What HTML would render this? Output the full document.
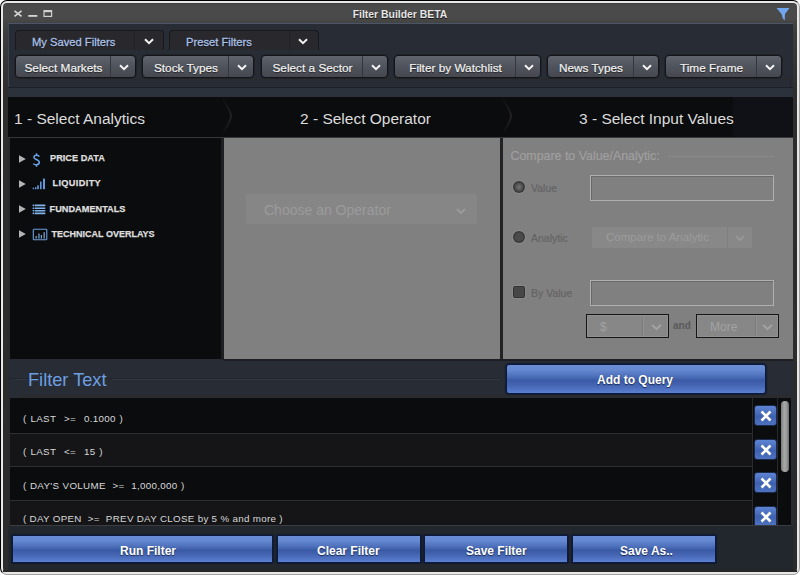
<!DOCTYPE html>
<html><head><meta charset="utf-8">
<style>
*{margin:0;padding:0;box-sizing:border-box}
html,body{width:800px;height:575px;overflow:hidden;background:#fff;font-family:"Liberation Sans",sans-serif}
.a{position:absolute}
#win{position:absolute;left:0;top:0;width:800px;height:575px;border-radius:7px;border:1px solid;border-color:#000 #a0a0a0 #a0a0a0 #000;background:#e8e8e8;}

#win3{position:absolute;left:3px;top:3px;width:794px;height:569px;border-radius:4px;background:linear-gradient(#3e3e3e 0,#4a4a4a 2px,#4a4a4a 16px,#444442 19px,#3c3c3c 30px,#2e2e2e 90px,#2b2b2b 100%);}
.title{left:0;width:800px;top:9.5px;text-align:center;color:#e6e6e6;font-weight:bold;font-size:10.4px;line-height:10px;text-shadow:0 1px 1px #111}
#panel{left:8px;top:23px;width:785px;height:547px;background:#272c35;border-top:1px solid #4a5668}
.tab{height:20px;top:30px;border:1px solid #17191d;border-bottom:none;border-radius:4px 4px 0 0;background:#29292d}
.tab .t{position:absolute;left:16px;top:2px;height:19px;line-height:19px;color:#aec4e8;font-size:11.2px;-webkit-text-stroke:0.3px #a4bde4;text-shadow:0 1px 1px #111}
.tab .d{position:absolute;top:0;height:19px;border-left:1px solid #222327}
.btn{top:55px;height:23px;border:1px solid #131519;box-shadow:0 0 0 0.5px #1a1c20;border-radius:4px;background:linear-gradient(#60646d,#4f535b 50%,#45484f);}
.btn .t{position:absolute;left:0;top:1.5px;height:21px;line-height:21px;text-align:center;color:#f2f2f2;font-size:11.8px;text-shadow:0 1px 1px #222;-webkit-text-stroke:0.2px #f2f2f2}
.btn .d{position:absolute;top:0;width:1px;height:21px;background:#33363c}
.chev{position:absolute}
.hdr{top:97px;height:40px;background:#0b0c0e;color:#e2e2e2;font-size:15.2px;line-height:40px}
.blue{border:1px solid #0b1a3e;border-radius:1px;box-shadow:0 0 1px 1px rgba(8,18,45,.55);background:linear-gradient(#6a8fd6 0%,#6588d1 18%,#4e70bb 40%,#3a5aa6 55%,#4565b2 72%,#5a80d0 100%);}
.row{left:9px;width:743px;color:#d8d8d8;font-size:9.8px;letter-spacing:0.3px;white-space:pre}
.xb{left:754px;width:23px;height:21px;border-radius:3px;background:linear-gradient(#5d84d3,#3f62b0 55%,#4d72c0);border:1px solid #1b2a4d}
.btxt{color:#fff;font-size:12px;font-weight:bold;line-height:16px;white-space:pre;text-shadow:0 1px 1px #1a2a55}
</style></head><body>
<div id="win"></div><div id="win2"></div><div id="win3"></div>
<!-- title bar icons -->
<svg class="a" style="left:12px;top:9px" width="44" height="10" viewBox="0 0 44 10">
 <path d="M2.5 1.9 L9.5 7.3 M9.5 1.9 L2.5 7.3" stroke="#d6d6d6" stroke-width="1.7"/>
 <rect x="16.3" y="6" width="9" height="1.8" fill="#d6d6d6"/>
 <rect x="32" y="1.6" width="7.6" height="5.8" fill="none" stroke="#d0d0d0" stroke-width="1.2"/>
 <rect x="32" y="1.6" width="7.6" height="1.6" fill="#d0d0d0"/>
</svg>
<div class="a title">Filter Builder BETA</div>
<svg class="a" style="left:776px;top:7px" width="15" height="15" viewBox="0 0 15 15">
 <path d="M0.5 1 L13.5 1 L9 7 L8.7 13.5 L6.8 11.5 L5.5 7 Z" fill="#6fa6ee"/>
</svg>

<div id="panel" class="a"></div>
<div class="a" style="left:8px;top:24px;width:1px;height:73px;background:#3d4654"></div>

<!-- tabs -->
<div class="a tab" style="left:15px;width:149px"><div class="t" style="width:119px">My Saved Filters</div><div class="d" style="left:118px;width:29px"></div>
<svg class="chev" style="left:127.5px;top:7px" width="10" height="7" viewBox="0 0 10 7"><path d="M1 1.2 L5 5.2 L9 1.2" fill="none" stroke="#f4f4f4" stroke-width="2"/></svg></div>
<div class="a tab" style="left:169px;width:150px"><div class="t" style="width:120px">Preset Filters</div><div class="d" style="left:119px;width:29px"></div>
<svg class="chev" style="left:127.5px;top:7px" width="10" height="7" viewBox="0 0 10 7"><path d="M1 1.2 L5 5.2 L9 1.2" fill="none" stroke="#f4f4f4" stroke-width="2"/></svg></div>

<!-- filter buttons -->
<div class="a btn" style="left:15px;width:121px"><div class="t" style="width:95px">Select Markets</div><div class="d" style="left:94px"></div><svg class="chev" style="left:103px;top:8px" width="10" height="7" viewBox="0 0 10 7"><path d="M1 1.2 L5 5.2 L9 1.2" fill="none" stroke="#f4f4f4" stroke-width="2"/></svg></div>
<div class="a btn" style="left:142px;width:112px"><div class="t" style="width:86px">Stock Types</div><div class="d" style="left:85px"></div><svg class="chev" style="left:94px;top:8px" width="10" height="7" viewBox="0 0 10 7"><path d="M1 1.2 L5 5.2 L9 1.2" fill="none" stroke="#f4f4f4" stroke-width="2"/></svg></div>
<div class="a btn" style="left:261px;width:127px"><div class="t" style="width:101px">Select a Sector</div><div class="d" style="left:100px"></div><svg class="chev" style="left:109px;top:8px" width="10" height="7" viewBox="0 0 10 7"><path d="M1 1.2 L5 5.2 L9 1.2" fill="none" stroke="#f4f4f4" stroke-width="2"/></svg></div>
<div class="a btn" style="left:394px;width:147px"><div class="t" style="width:121px">Filter by Watchlist</div><div class="d" style="left:120px"></div><svg class="chev" style="left:129px;top:8px" width="10" height="7" viewBox="0 0 10 7"><path d="M1 1.2 L5 5.2 L9 1.2" fill="none" stroke="#f4f4f4" stroke-width="2"/></svg></div>
<div class="a btn" style="left:547px;width:112px"><div class="t" style="width:86px">News Types</div><div class="d" style="left:85px"></div><svg class="chev" style="left:94px;top:8px" width="10" height="7" viewBox="0 0 10 7"><path d="M1 1.2 L5 5.2 L9 1.2" fill="none" stroke="#f4f4f4" stroke-width="2"/></svg></div>
<div class="a btn" style="left:665px;width:117px"><div class="t" style="width:91px">Time Frame</div><div class="d" style="left:90px"></div><svg class="chev" style="left:99px;top:8px" width="10" height="7" viewBox="0 0 10 7"><path d="M1 1.2 L5 5.2 L9 1.2" fill="none" stroke="#f4f4f4" stroke-width="2"/></svg></div>

<!-- strip below buttons -->
<div class="a" style="left:9px;top:79px;width:781px;height:1px;background:#2b2b2e"></div>
<div class="a" style="left:790px;top:79px;width:1px;height:18px;background:#22252b"></div>
<div class="a" style="left:8px;top:87px;width:785px;height:1px;background:#1d2026"></div>
<div class="a" style="left:8px;top:88px;width:785px;height:9px;background:#2c323b"></div>

<!-- headers -->
<div class="a hdr" style="left:8px;width:785px"></div>
<div class="a" style="left:733px;top:97px;width:60px;height:40px;background:#0f1116"></div>
<div class="a hdr" style="left:14px;width:200px;background:none;padding-top:2px;font-size:15.5px;color:#dcdcdc">1 - Select Analytics</div>
<div class="a hdr" style="left:300px;width:200px;background:none;padding-top:2px;font-size:15.5px;color:#dcdcdc">2 - Select Operator</div>
<div class="a hdr" style="left:579px;width:200px;background:none;padding-top:2px;font-size:15.5px;color:#dcdcdc">3 - Select Input Values</div>
<svg class="a" style="left:218px;top:97px" width="16" height="40" viewBox="0 0 16 40"><defs><linearGradient id="cg" x1="0" y1="0" x2="0" y2="1"><stop offset="0" stop-color="#0b0c0e"/><stop offset="0.5" stop-color="#232326"/><stop offset="1" stop-color="#0b0c0e"/></linearGradient></defs><path d="M4 1 C8 7 13 14 13 19 C13 24 8 31 4 38" fill="none" stroke="url(#cg)" stroke-width="2"/></svg>
<svg class="a" style="left:498px;top:97px" width="16" height="40" viewBox="0 0 16 40"><path d="M4 1 C8 7 13 14 13 19 C13 24 8 31 4 38" fill="none" stroke="url(#cg)" stroke-width="2"/></svg>
<div class="a" style="left:8px;top:137px;width:785px;height:1px;background:#36383c"></div>

<!-- column panels -->
<div class="a" style="left:8px;top:138px;width:2px;height:221px;background:#2b2b2b"></div>
<div class="a" style="left:10px;top:138px;width:211px;height:221px;background:#0b0c0e"></div>
<div class="a" style="left:221px;top:138px;width:3px;height:222px;background:#1d1f23"></div>
<div class="a" style="left:224px;top:138px;width:276px;height:221px;background:#808080"></div>
<div class="a" style="left:500px;top:138px;width:3px;height:222px;background:#222325"></div>
<div class="a" style="left:503px;top:138px;width:290px;height:221px;background:#808080"></div>

<!-- tree -->
<svg class="a" style="left:18px;top:155px" width="8" height="8" viewBox="0 0 8 8"><path d="M1 0.3 L7.8 4 L1 7.7Z" fill="#b4b4b4"/></svg>
<svg class="a" style="left:18px;top:180px" width="8" height="8" viewBox="0 0 8 8"><path d="M1 0.3 L7.8 4 L1 7.7Z" fill="#b4b4b4"/></svg>
<svg class="a" style="left:18px;top:205px" width="8" height="8" viewBox="0 0 8 8"><path d="M1 0.3 L7.8 4 L1 7.7Z" fill="#b4b4b4"/></svg>
<svg class="a" style="left:18px;top:230px" width="8" height="8" viewBox="0 0 8 8"><path d="M1 0.3 L7.8 4 L1 7.7Z" fill="#b4b4b4"/></svg>
<svg class="a" style="left:32px;top:153px" width="9" height="14" viewBox="0 0 9 14"><path d="M7.3 3.6 C6.6 2 2.2 1.6 1.9 4.3 C1.7 6.6 7.4 6.5 7.3 9.4 C7.2 12.2 2.6 12.3 1.3 10.6 M4.5 0.3 V2.6 M4.5 11.4 V13.7" fill="none" stroke="#6aa3e6" stroke-width="1.5"/></svg>
<svg class="a" style="left:32px;top:178px" width="14" height="12" viewBox="0 0 14 12"><g fill="#5f98dc"><rect x="0.7" y="9.7" width="1.4" height="1.5"/><rect x="3" y="9.2" width="1.5" height="2"/><rect x="5.2" y="7.3" width="1.6" height="3.9"/><rect x="8" y="3.6" width="1.6" height="7.6"/><rect x="11" y="0.6" width="2" height="10.6"/></g></svg>
<svg class="a" style="left:32px;top:204px" width="14" height="11" viewBox="0 0 14 11"><g fill="#80b3ec"><rect x="0.5" y="0.6" width="13" height="1.6" rx="0.8"/><rect x="0.5" y="3.4" width="13" height="1.6" rx="0.8"/><rect x="0.5" y="6" width="13" height="1.6" rx="0.8"/><rect x="0.5" y="8.5" width="13" height="1.7" rx="0.8"/></g><g fill="#0b0c0e"><rect x="2.3" y="0" width="0.6" height="11"/></g></svg>
<svg class="a" style="left:32px;top:228px" width="16" height="13" viewBox="0 0 16 13"><rect x="1.3" y="1.3" width="13.5" height="10.5" rx="0.8" fill="none" stroke="#6c9fdc" stroke-width="1.1"/><g fill="#8ab8ee"><rect x="3.6" y="8" width="1.1" height="2.6"/><rect x="6.4" y="5.5" width="1.1" height="5.1"/><rect x="8.8" y="7" width="1.1" height="3.6"/><rect x="11.6" y="4.2" width="1.1" height="6.4"/></g></svg>
<div class="a" style="left:50px;top:153px;font-size:9.2px;font-weight:bold;color:#dedede;line-height:10px;-webkit-text-stroke:0.25px #dedede">PRICE DATA</div>
<div class="a" style="left:52.5px;top:178px;letter-spacing:0.35px;font-size:9.2px;font-weight:bold;color:#dedede;line-height:10px;-webkit-text-stroke:0.25px #dedede">LIQUIDITY</div>
<div class="a" style="left:49.6px;top:203.5px;font-size:9.2px;font-weight:bold;color:#dedede;line-height:10px;-webkit-text-stroke:0.25px #dedede">FUNDAMENTALS</div>
<div class="a" style="left:51.6px;top:228.5px;font-size:9px;font-weight:bold;color:#dedede;line-height:10px;-webkit-text-stroke:0.25px #dedede">TECHNICAL OVERLAYS</div>

<!-- operator -->
<div class="a" style="left:246px;top:194px;width:231px;height:30px;background:#868686;border-radius:2px"></div>
<div class="a" style="left:264px;top:201px;font-size:14px;color:#9b9b9b;line-height:18px">Choose an Operator</div>
<svg class="a" style="left:456px;top:208px" width="10" height="6" viewBox="0 0 10 6"><path d="M1 1 L5 5 L9 1" fill="none" stroke="#a0a0a0" stroke-width="1.5"/></svg>

<!-- input values -->
<div class="a" style="left:510.5px;top:150px;font-size:12.4px;color:#a0a0a0;line-height:13px;-webkit-text-stroke:0.15px #a0a0a0">Compare to Value/Analytic:</div>
<div class="a" style="left:668px;top:156px;width:107px;height:1px;background:#8a8a8a"></div>
<div class="a" style="left:513px;top:180.5px;width:12px;height:12px;border-radius:50%;background:radial-gradient(circle,#747474 0,#5c5c5c 2.5px,#4c4c4c 4px,#3a3a3a 5px,#383838 6px);box-shadow:0 0 0 1px #8a8a8a"></div>
<div class="a" style="left:531px;top:182px;font-size:10.5px;color:#646464;line-height:12px;-webkit-text-stroke:0.2px #646464">Value</div>
<div class="a" style="left:590px;top:175px;width:184px;height:26px;border:1px solid #b0b0b0;box-shadow:inset 1px 1px 0 #6a6a6a"></div>
<div class="a" style="left:513px;top:230.5px;width:12px;height:12px;border-radius:50%;background:radial-gradient(circle,#4c4c4c 0,#4a4a4a 4px,#3a3a3a 5px,#383838 6px);box-shadow:0 0 0 1px #8a8a8a"></div>
<div class="a" style="left:531px;top:232px;font-size:10.5px;color:#646464;line-height:12px;-webkit-text-stroke:0.2px #646464">Analytic</div>
<div class="a" style="left:592px;top:227px;width:160px;height:21px;background:#888"></div>
<div class="a" style="left:727px;top:227px;width:1px;height:21px;background:#7e7e7e"></div>
<div class="a" style="left:606px;top:231px;font-size:11.5px;color:#9c9c9c;line-height:13px">Compare to Analytic</div>
<svg class="a" style="left:735px;top:235px" width="10" height="6" viewBox="0 0 10 6"><path d="M1 1 L5 5 L9 1" fill="none" stroke="#9c9c9c" stroke-width="1.5"/></svg>
<div class="a" style="left:513px;top:285.5px;width:12px;height:12px;background:#474747;border:1px solid #323232;border-radius:1.5px;box-shadow:0 0 0 1px #8a8a8a"></div>
<div class="a" style="left:531px;top:287px;font-size:10.5px;color:#646464;line-height:12px;-webkit-text-stroke:0.2px #646464">By Value</div>
<div class="a" style="left:590px;top:280px;width:184px;height:26px;border:1px solid #b0b0b0;box-shadow:inset 1px 1px 0 #6a6a6a"></div>
<div class="a" style="left:586px;top:314px;width:83px;height:24px;border:1.5px solid #161616;background:#878787;box-shadow:inset 0 0 0 1px #909090"></div>
<div class="a" style="left:642px;top:316px;width:1px;height:20px;background:#7c7c7c"></div><div class="a" style="left:643px;top:316px;width:1px;height:20px;background:#929292"></div>
<div class="a" style="left:600px;top:321px;font-size:12px;color:#a2a2a2;line-height:13px">$</div>
<svg class="a" style="left:651px;top:323.5px" width="11" height="7" viewBox="0 0 11 7"><path d="M1 1 L5.5 5 L10 1" fill="none" stroke="#a4a4a4" stroke-width="1.7"/></svg>
<div class="a" style="left:673px;top:320px;font-size:10px;font-weight:bold;color:#5a5a5a;line-height:11px">and</div>
<div class="a" style="left:696px;top:314px;width:83px;height:24px;border:1.5px solid #161616;background:#878787;box-shadow:inset 0 0 0 1px #909090"></div>
<div class="a" style="left:755px;top:316px;width:1px;height:20px;background:#7c7c7c"></div><div class="a" style="left:756px;top:316px;width:1px;height:20px;background:#929292"></div>
<div class="a" style="left:710px;top:321px;font-size:12px;color:#a2a2a2;line-height:13px">More</div>
<svg class="a" style="left:762px;top:323.5px" width="11" height="7" viewBox="0 0 11 7"><path d="M1 1 L5.5 5 L10 1" fill="none" stroke="#a4a4a4" stroke-width="1.7"/></svg>

<!-- filter text bar -->
<div class="a" style="left:224px;top:359px;width:569px;height:2px;background:#1d1e21"></div>
<div class="a" style="left:8px;top:378px;width:492px;height:1px;background:#22262d"></div>
<div class="a" style="left:20px;top:395px;width:773px;height:3px;background:#2a2b2f"></div>
<div class="a" style="left:8px;top:526px;width:785px;height:45px;background:#22262d"></div>
<div class="a" style="left:3px;top:570px;width:794px;height:2px;background:#262626"></div>
<div class="a" style="left:15px;top:379px;width:12px;height:1px;background:#323943"></div>
<div class="a" style="left:112px;top:379px;width:388px;height:1px;background:#323943"></div>
<div class="a" style="left:28px;top:369px;font-size:18.2px;color:#6d9fe0;line-height:22px">Filter Text</div>
<div class="a blue" style="left:506px;top:364px;width:260px;height:30px;border-radius:3px"></div><div class="a btxt" style="left:597px;top:372px">Add to Query</div>

<!-- list -->
<div class="a" style="left:8px;top:398px;width:2px;height:128px;background:#2b2b2b"></div>
<div class="a" style="left:10px;top:398px;width:781px;height:127px;background:#0b0c0e"></div>
<div class="a" style="left:10px;top:434px;width:742px;height:33px;background:#151517"></div>
<div class="a" style="left:10px;top:500px;width:742px;height:25px;background:#151517"></div>
<div class="a" style="left:10px;top:433px;width:742px;height:1px;background:#2e2f31"></div>
<div class="a" style="left:10px;top:466px;width:742px;height:1px;background:#2e2f31"></div>
<div class="a" style="left:10px;top:500px;width:742px;height:1px;background:#2e2f31"></div>
<div class="a" style="left:752px;top:398px;width:1px;height:127px;background:#2a2a2c"></div>
<div class="a" style="left:777px;top:398px;width:1px;height:127px;background:#2a2a2c"></div>
<div class="a row" style="left:23px;top:413px;line-height:12px;word-spacing:0.93px">( LAST  &gt;=  0.1000 )</div>
<div class="a row" style="left:23px;top:446px;line-height:12px;word-spacing:0.93px">( LAST  &lt;=  15 )</div>
<div class="a row" style="left:23px;top:480px;line-height:12px;word-spacing:0.34px">( DAY'S VOLUME  &gt;=  1,000,000 )</div>
<div class="a row" style="left:23px;top:513px;line-height:12px;word-spacing:0px">( DAY OPEN  &gt;=  PREV DAY CLOSE by 5 % and more )</div>
<div class="a xb" style="top:405px"></div>
<div class="a xb" style="top:439px"></div>
<div class="a xb" style="top:472px"></div>
<div class="a xb" style="top:506px;height:19px;border-bottom:none;border-radius:3px 3px 0 0"></div>
<svg class="a" style="left:760px;top:410px" width="12" height="12" viewBox="0 0 12 12"><path d="M1.5 1.5 L10.5 10.5 M10.5 1.5 L1.5 10.5" stroke="#fff" stroke-width="2.6"/></svg>
<svg class="a" style="left:760px;top:444px" width="12" height="12" viewBox="0 0 12 12"><path d="M1.5 1.5 L10.5 10.5 M10.5 1.5 L1.5 10.5" stroke="#fff" stroke-width="2.6"/></svg>
<svg class="a" style="left:760px;top:477px" width="12" height="12" viewBox="0 0 12 12"><path d="M1.5 1.5 L10.5 10.5 M10.5 1.5 L1.5 10.5" stroke="#fff" stroke-width="2.6"/></svg>
<svg class="a" style="left:760px;top:511px" width="12" height="12" viewBox="0 0 12 12"><path d="M1.5 1.5 L10.5 10.5 M10.5 1.5 L1.5 10.5" stroke="#fff" stroke-width="2.6"/></svg>
<div class="a" style="left:781px;top:401px;width:8px;height:71px;border-radius:4px;background:linear-gradient(90deg,#7a7a7a,#a8a8a8 40%,#9a9a9a 70%,#6a6a6a)"></div>
<div class="a" style="left:10px;top:525px;width:781px;height:1px;background:#3a3d42"></div>

<!-- bottom buttons -->
<div class="a blue" style="left:12px;top:535px;width:261px;height:28px"></div><div class="a btxt" style="left:120px;top:543px">Run Filter</div>
<div class="a blue" style="left:277px;top:535px;width:144px;height:28px"></div><div class="a btxt" style="left:317px;top:543px">Clear Filter</div>
<div class="a blue" style="left:424px;top:535px;width:144px;height:28px"></div><div class="a btxt" style="left:466px;top:543px">Save Filter</div>
<div class="a blue" style="left:572px;top:535px;width:144px;height:28px"></div><div class="a btxt" style="left:620px;top:543px">Save As..</div>
</body></html>
